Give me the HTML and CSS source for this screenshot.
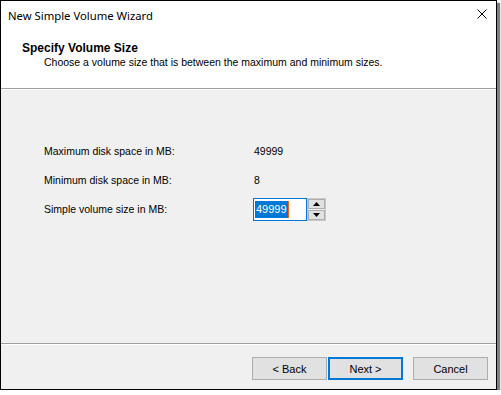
FILE: index.html
```html
<!DOCTYPE html>
<html lang="en">
<head>
    <meta charset="UTF-8">
    <meta name="viewport" content="width=device-width, initial-scale=1.0">
    <title>New Simple Volume Wizard</title>
    <link rel="stylesheet" href="styles.css">
</head>
<body>
    <div class="window">
        <div class="titlebar">
            <span class="title">New Simple Volume Wizard</span>
            <span class="close">
                <svg width="10" height="10" viewBox="0 0 10 10">
                    <path d="M0.5 0.5 L9.5 9.5 M9.5 0.5 L0.5 9.5" stroke="#000" stroke-width="1" fill="none"/>
                </svg>
            </span>
        </div>

        <div class="header">
            <div class="header-title">Specify Volume Size</div>
            <div class="header-sub">Choose a volume size that is between the maximum and minimum sizes.</div>
        </div>

        <div class="content">
            <div class="row">
                <span class="label">Maximum disk space in MB:</span>
                <span class="value">49999</span>
            </div>
            <div class="row">
                <span class="label">Minimum disk space in MB:</span>
                <span class="value">8</span>
            </div>
            <div class="row">
                <span class="label">Simple volume size in MB:</span>
                <div class="spin-field">
                    <div class="spin-input">
                        <span class="selected">49999</span><span class="caret"></span>
                    </div>
                    <div class="spin-buttons">
                        <div class="spin-btn">
                            <svg width="7" height="4" viewBox="0 0 7 4"><path d="M3.5 0 L7 4 L0 4 Z" fill="#000"/></svg>
                        </div>
                        <div class="spin-btn">
                            <svg width="7" height="4" viewBox="0 0 7 4"><path d="M0 0 L7 0 L3.5 4 Z" fill="#000"/></svg>
                        </div>
                    </div>
                </div>
            </div>
        </div>

        <div class="footer">
            <button class="btn">&lt; Back</button>
            <button class="btn btn-default">Next &gt;</button>
            <button class="btn btn-cancel">Cancel</button>
        </div>
    </div>
</body>
</html>
```

FILE: styles.css
```css
body {
    margin: 0;
    padding: 0;
    background-color: #fff;
    font-family: "Liberation Sans", Arial, sans-serif;
    font-size: 10.5px;
    color: #000;
}

.window {
    width: 495px;
    height: 388px;
    border: 1px solid #000;
    background-color: #f0f0f0;
    box-shadow: 3px 3px 1px rgba(0, 0, 0, 0.5);
    display: flex;
    flex-direction: column;
}

.titlebar {
    height: 30px;
    background: #fff;
    display: flex;
    align-items: center;
    justify-content: space-between;
    padding: 0 9px 0 7px;
}

.title {
    font-family: "Segoe UI", "Noto Sans", sans-serif;
    font-size: 11.3px;
    margin-top: -2px;
}

.close {
    display: flex;
    margin-top: -5px;
}

.header {
    height: 58px;
    background: #fff;
    border-bottom: 1px solid #a0a0a0;
    box-shadow: 0 1px 0 #fff;
    padding-top: 10px;
    box-sizing: border-box;
}

.header-title {
    font-weight: bold;
    font-size: 12px;
    line-height: 14px;
    padding-left: 21px;
}

.header-sub {
    line-height: 14px;
    padding-left: 43px;
}

.content {
    height: 254px;
    padding: 50px 0 0 43px;
    box-sizing: border-box;
    display: flex;
    flex-direction: column;
    gap: 6px;
}

.row {
    height: 23px;
    display: flex;
    align-items: center;
}

.label {
    width: 210px;
}

.spin-field {
    display: flex;
    margin-left: -1px;
    margin-top: 2px;
}

.spin-input {
    width: 51px;
    height: 21px;
    border: 1px solid #0078d7;
    background: #fff;
    display: flex;
    align-items: center;
    padding-left: 1px;
    font-size: 11px;
}

.selected {
    background: #0078d7;
    color: #fff;
    line-height: 17px;
    padding: 0 1px;
}

.caret {
    width: 1px;
    height: 17px;
    background: #f7630c;
}

.spin-buttons {
    width: 17px;
    height: 21px;
    border: 1px solid #c8c8c8;
    display: flex;
    flex-direction: column;
    gap: 1px;
    background: #f0f0f0;
}

.spin-btn {
    flex: 1;
    background: #e1e1e1;
    border: 1px solid #adadad;
    display: flex;
    align-items: center;
    justify-content: center;
}

.footer {
    flex: 1;
    border-top: 1px solid #a0a0a0;
    box-shadow: inset 0 1px 0 #fff;
    display: flex;
    justify-content: flex-end;
    align-items: flex-start;
    padding: 13px 8px 0 0;
}

.btn {
    width: 75px;
    height: 23px;
    background: #e1e1e1;
    border: 1px solid #adadad;
    font-family: "Liberation Sans", Arial, sans-serif;
    font-size: 11px;
    color: #000;
    padding: 0;
    margin: 0;
}

.btn-default {
    margin-left: 1px;
    border: 2px solid #0078d7;
}

.btn-cancel {
    margin-left: 10px;
}
```
